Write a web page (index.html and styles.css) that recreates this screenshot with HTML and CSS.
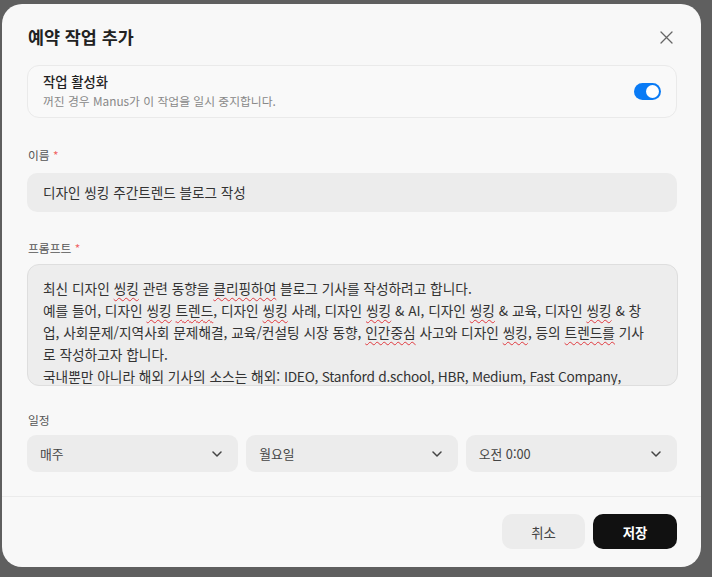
FILE: index.html
```html
<!DOCTYPE html>
<html lang="ko">
<head>
<meta charset="utf-8">
<title>예약 작업 추가</title>
<link rel="stylesheet" href="styles.css">
</head>
<body>
<div class="dialog">
  <div class="dialog-body">
    <div class="header">
      <h1 class="title">예약 작업 추가</h1>
      <button class="close" aria-label="닫기">
        <svg width="13" height="13" viewBox="0 0 13 13"><path d="M1 1L12 12M12 1L1 12" stroke="#666" stroke-width="1.3" stroke-linecap="round" fill="none"/></svg>
      </button>
    </div>

    <div class="toggle-card">
      <div class="toggle-text">
        <div class="toggle-title">작업 활성화</div>
        <div class="toggle-sub">꺼진 경우 Manus가 이 작업을 일시 중지합니다.</div>
      </div>
      <div class="switch"><span class="knob"></span></div>
    </div>

    <div class="label label-name">이름 <span class="req">*</span></div>
    <div class="input">디자인 씽킹 주간트렌드 블로그 작성</div>

    <div class="label label-prompt">프롬프트 <span class="req">*</span></div>
    <div class="textarea">
      <div class="line">최신 디자인 <span class="sp">씽킹</span> 관련 동향을 <span class="sp">클리핑하여</span> 블로그 기사를 작성하려고 합니다.</div>
      <div class="line">예를 들어, 디자인 <span class="sp">씽킹</span> <span class="sp">트렌드</span>, 디자인 <span class="sp">씽킹</span> 사례, 디자인 <span class="sp">씽킹</span> &amp; AI, 디자인 <span class="sp">씽킹</span> &amp; 교육, 디자인 <span class="sp">씽킹</span> &amp; 창</div>
      <div class="line">업, 사회문제/지역사회 문제해결, 교육/컨설팅 시장 동향, <span class="sp">인간중심</span> 사고와 디자인 <span class="sp">씽킹</span>, 등의 <span class="sp">트렌드를</span> 기사</div>
      <div class="line">로 작성하고자 합니다.</div>
      <div class="line"><span class="sp">국내뿐만</span> 아니라 해외 기사의 소스는 해외: <span class="latin">IDEO, Stanford <span class="sp">d.school</span>, HBR, Medium, Fast Company,</span></div>
    </div>

    <div class="label label-schedule">일정</div>
    <div class="selects">
      <div class="select"><span>매주</span><svg width="10" height="6" viewBox="0 0 10 6"><path d="M1 1L5 5L9 1" stroke="#444" stroke-width="1.5" fill="none" stroke-linecap="round" stroke-linejoin="round"/></svg></div>
      <div class="select"><span>월요일</span><svg width="10" height="6" viewBox="0 0 10 6"><path d="M1 1L5 5L9 1" stroke="#444" stroke-width="1.5" fill="none" stroke-linecap="round" stroke-linejoin="round"/></svg></div>
      <div class="select"><span>오전 0:00</span><svg width="10" height="6" viewBox="0 0 10 6"><path d="M1 1L5 5L9 1" stroke="#444" stroke-width="1.5" fill="none" stroke-linecap="round" stroke-linejoin="round"/></svg></div>
    </div>
  </div>

  <div class="footer">
    <button class="btn btn-cancel">취소</button>
    <button class="btn btn-save">저장</button>
  </div>
</div>
</body>
</html>
```

FILE: styles.css
```css
* { box-sizing: border-box; }

html, body {
  margin: 0;
  background: #5f5f5f;
}

body {
  padding: 4px 11px 10px 2px;
  font-family: "Noto Sans CJK KR", "Noto Sans", sans-serif;
  color: #222;
}

.dialog {
  width: 699px;
  height: 563px;
  background: #f8f8f8;
  border-radius: 20px;
  display: flex;
  flex-direction: column;
}

.dialog-body {
  padding: 20px 24px 24px 25px;
  border-bottom: 1px solid #ebebeb;
}

.header {
  height: 26px;
  display: flex;
  align-items: center;
  justify-content: space-between;
  margin-bottom: 15px;
}

.title {
  margin: 0 0 0 1px;
  font-size: 17.4px;
  font-weight: 700;
  line-height: 26px;
  color: #222;
}

.close {
  border: 0;
  background: none;
  padding: 0;
  width: 13px;
  height: 13px;
  margin-right: 4px;
  display: flex;
}

.toggle-card {
  height: 53px;
  border: 1px solid #eaeaea;
  border-radius: 12px;
  background: #f9f9f9;
  padding: 0 15px;
  display: flex;
  align-items: center;
  justify-content: space-between;
}

.toggle-title {
  font-size: 13.3px;
  font-weight: 500;
  line-height: 18px;
  color: #222;
}

.toggle-sub {
  font-size: 11.8px;
  line-height: 19px;
  color: #888;
}

.switch {
  width: 27px;
  height: 17px;
  border-radius: 9px;
  background: #0a7bf5;
  display: flex;
  align-items: center;
  justify-content: flex-end;
  padding-right: 2px;
}

.knob {
  width: 13px;
  height: 13px;
  border-radius: 50%;
  background: #fff;
}

.label {
  font-size: 11.8px;
  line-height: 18px;
  color: #555;
  margin-left: 1px;
}

.req { color: #f06464; }

.label-name { margin-top: 28px; margin-bottom: 9px; }
.label-prompt { margin-top: 27px; margin-bottom: 7px; }
.label-schedule { margin-top: 25px; margin-bottom: 6px; }

.input {
  height: 39px;
  border-radius: 10px;
  background: #ececec;
  padding: 0 16px;
  font-size: 13.6px;
  line-height: 39px;
  color: #333;
}

.textarea {
  height: 122px;
  width: 651px;
  border: 1px solid #dedede;
  border-radius: 12px;
  background: #ededed;
  padding: 12px 15px 0;
  font-size: 13.7px;
  line-height: 22px;
  color: #333;
  overflow: hidden;
}

.line { white-space: nowrap; }

.latin { letter-spacing: -0.25px; }

.sp {
  text-decoration: underline wavy #e0393e;
  text-decoration-thickness: 1px;
  text-underline-offset: 3px;
}

.selects {
  display: grid;
  grid-template-columns: 1fr 1fr 1fr;
  gap: 8px;
}

.select {
  height: 37px;
  border-radius: 9px;
  background: #ececec;
  display: flex;
  align-items: center;
  justify-content: space-between;
  padding: 0 16px 0 13px;
  font-size: 12.8px;
  color: #444;
}

.footer {
  flex: 1;
  display: flex;
  justify-content: flex-end;
  align-items: flex-start;
  gap: 8px;
  padding: 17px 24px 0 0;
}

.btn {
  height: 35px;
  border: 0;
  border-radius: 10px;
  font-family: inherit;
  font-size: 13.4px;
}

.btn-cancel {
  width: 83px;
  background: #ececec;
  color: #444;
}

.btn-save {
  width: 84px;
  background: #111;
  color: #fff;
  font-weight: 700;
}
```
